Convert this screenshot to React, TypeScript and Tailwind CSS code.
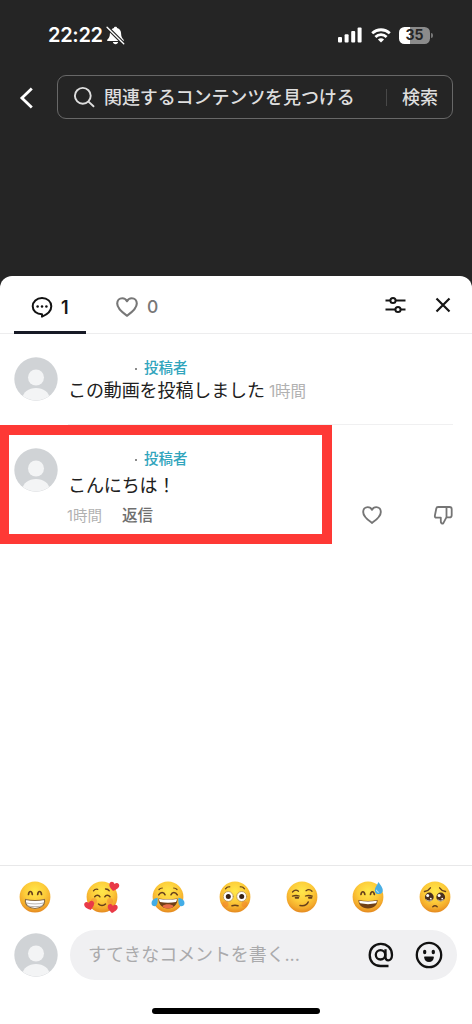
import type { ReactNode } from 'react';

const Avatar = () => (
    <svg viewBox="0 0 44 44" className="w-11 h-11 shrink-0">
        <defs>
            <clipPath id="avatar-clip">
                <circle cx="22" cy="22" r="21.5" />
            </clipPath>
        </defs>
        <circle cx="22" cy="22" r="21.7" fill="#d0d3d6" />
        <g clipPath="url(#avatar-clip)" fill="#f3f4f5">
            <circle cx="22" cy="20.5" r="8" />
            <ellipse cx="22" cy="41.5" rx="13.5" ry="10.5" />
        </g>
    </svg>
);

const Heart = ({ className }: { className: string }) => (
    <svg viewBox="0 0 22 20" className={className} fill="none" stroke="currentColor" strokeWidth="2.1" strokeLinejoin="round">
        <path d="M11 18.8C8.2 16.8 1.2 12.2 1.2 6.6 1.2 3.5 3.4 1.2 6.2 1.2c2.2 0 3.9 1.1 4.8 3 .9-1.9 2.6-3 4.8-3 2.8 0 5 2.3 5 5.4 0 5.6-7 10.2-9.8 12.2Z" />
    </svg>
);

const StatusBar = () => (
    <div className="h-[70px] flex items-center pl-12 pr-[39px] text-white">
        <span className="font-['Inter'] font-semibold text-[20px] leading-6 tracking-[-0.3px] w-[56px] whitespace-nowrap">22:22</span>
        <svg viewBox="0 0 18 18" className="w-[19px] h-[19px] ml-[2px] mt-px">
            <path d="M9 .8c.9 0 1.4.5 1.5 1.2 2.500.7 3.700 2.700 3.800 5.200.1 3 .7 4 2.200 5.500.7.8.4 1.500-.5 1.500H2c-.9 0-1.300-.7-.6-1.500C3 11.200 3.600 10.200 3.700 7.200 3.800 4.700 5 2.700 7.500 2 7.600 1.300 8.100.8 9 .8ZM6.500 15.200h5c-.3 1.300-1.200 2.100-2.500 2.100s-2.200-.8-2.500-2.100Z" fill="#fff" />
            <path d="m1 1.200 15.800 15.600" stroke="#252525" strokeWidth="3.500" />
            <path d="m1 1.200 15.800 15.600" stroke="#fff" strokeWidth="1.300" strokeLinecap="round" />
        </svg>
        <div className="flex items-center ml-auto">
            <svg viewBox="0 0 24 16" className="w-6 h-4 fill-white">
                <rect x="0" y="10" width="4" height="5.500" rx="1" />
                <rect x="6.600" y="7.200" width="4" height="8.300" rx="1" />
                <rect x="13.200" y="4" width="4" height="11.500" rx="1" />
                <rect x="19.600" y="0.500" width="4" height="15" rx="1" />
            </svg>
            <svg viewBox="0 0 20 15" className="w-5 h-[15px] ml-[9px]" fill="none" stroke="#fff" strokeWidth="2.800">
                <path d="M1.200 5.200c5-4.600 12.600-4.600 17.600 0" />
                <path d="M4.400 8.900c3.200-3 8-3 11.200 0" />
                <path d="M10 14.600 6.900 11.500c1.700-1.600 4.500-1.600 6.200 0Z" fill="#fff" stroke="none" />
            </svg>
            <div className="ml-[8px] w-[31px] h-[17px] rounded-[5.500px] bg-linear-to-r from-white from-36% to-[#8b8b8b] to-36% flex items-center justify-center text-[#252525] text-[14px] leading-none font-bold font-['Inter']">
                35
            </div>
            <div className="ml-px w-[2px] h-[5px] rounded-r bg-[#777]"></div>
        </div>
    </div>
);

const SearchHeader = () => (
    <div className="flex items-center pl-[19px] pr-[19px] mt-[5px] h-[44px] text-[#dedede]">
        <svg viewBox="0 0 14 22" className="w-[14px] h-[22px] mt-px" fill="none" stroke="#fff" strokeWidth="2.800">
            <path d="M12.800 1.500 2.900 11l9.900 9.500" />
        </svg>
        <div className="ml-[24px] flex-1 h-[44px] flex items-center rounded-[9px] border-[1.500px] border-[#686868] text-[18px] font-medium whitespace-nowrap">
            <svg viewBox="0 0 22 22" className="w-[22px] h-[22px] ml-[15px] shrink-0" fill="none" stroke="currentColor" strokeWidth="1.900">
                <circle cx="9.800" cy="9.800" r="7.900" />
                <path d="m15.500 15.600 5 4.700" strokeLinecap="round" />
            </svg>
            <span className="ml-[9px] w-[252px] tracking-[-0.1px]">関連するコンテンツを見つける</span>
            <span className="ml-[30px] w-px h-[17px] bg-[#484848]"></span>
            <span className="ml-[15px] tracking-[-0.1px]">検索</span>
        </div>
    </div>
);

const Tabs = () => (
    <div className="h-[58px] flex items-stretch border-b border-[#ededee] pl-[14px] pr-[21px]">
        <div className="relative w-[73px] flex items-center pt-[4px]">
            <svg viewBox="0 0 22 22" className="w-[22px] h-[22px] ml-[17px]" fill="none" stroke="#111" strokeWidth="2">
                <path d="M11 18.200c-5.400 0-9.300-3.300-9.300-7.900S5.600 2 11 2s9.300 3.600 9.300 8.200c0 4.200-3.600 8-9.300 10.400v-2.400Z" strokeLinejoin="round" />
                <g fill="#111" stroke="none">
                    <circle cx="6.600" cy="10.500" r="1.250" />
                    <circle cx="11" cy="10.500" r="1.250" />
                    <circle cx="15.400" cy="10.500" r="1.250" />
                </g>
            </svg>
            <span className="ml-[8px] mt-px text-[18px] font-semibold text-[#161616]">1</span>
            <span className="absolute left-0 -bottom-px w-[72px] h-[3px] bg-[#171a26]"></span>
        </div>
        <div className="flex items-center ml-[29px] pt-[5px] text-[#777]">
            <Heart className="w-[22px] h-5" />
            <span className="ml-[9px] text-[17.500px] font-medium">0</span>
        </div>
        <div className="flex items-center ml-auto">
            <svg viewBox="0 0 21 18" className="w-[21px] h-[18px]" fill="none" stroke="#161616" strokeWidth="2">
                <path d="M.5 4.500h5M10.500 4.500h10M.5 13.500H10M15.500 13.500h5" />
                <circle cx="8" cy="4.500" r="2.600" />
                <circle cx="13" cy="13.500" r="2.600" />
            </svg>
            <svg viewBox="0 0 16 16" className="w-4 h-4 ml-[29px] mt-px" stroke="#161616" strokeWidth="2.200">
                <path d="m1.500 1.500 13 13M14.500 1.500l-13 13" />
            </svg>
        </div>
    </div>
);

const AuthorTag = () => (
    <div className="pl-[67px] flex items-center h-[18px] text-[14.500px] font-medium text-[#31a5bd] whitespace-nowrap">
        <span className="w-[2px] h-[2px] bg-[#666] rounded-full mr-[7px] mt-[2px]"></span>
        <span>投稿者</span>
    </div>
);

const Comments = () => (
    <div className="relative">
        <div className="flex items-start pl-[14px] pt-[23px] h-[91px]">
            <Avatar />
            <div className="ml-[10px] pt-[2px]">
                <AuthorTag />
                <p className="mt-px text-[18px] leading-[26px] text-[#202020] whitespace-nowrap tracking-[-0.1px]">
                    この動画を投稿しました
                    <span className="ml-[4px] text-[15.500px] text-[#b1b1b1] tracking-[-0.1px]">1時間</span>
                </p>
            </div>
        </div>
        <div className="ml-[68px] mr-[19px] -mt-px h-px bg-[#f0f0f1]"></div>

        <div className="flex items-start pl-[14px] pt-[23px] h-[118px]">
            <Avatar />
            <div className="ml-[10px] pt-[2px]">
                <AuthorTag />
                <p className="mt-[5px] text-[18px] leading-[26px] text-[#202020] whitespace-nowrap tracking-[-0.1px]">こんにちは！</p>
                <div className="mt-[7px] flex items-center text-[14.500px] leading-5">
                    <span className="text-[#b1b1b1] w-[54px] -ml-px mr-px">1時間</span>
                    <span className="text-[#6f6f6f] font-medium text-[15.500px]">返信</span>
                </div>
            </div>
            <div className="ml-auto mr-[19px] mt-[57px] flex items-center gap-[51px] text-[#757575]">
                <Heart className="w-[20px] h-[18px]" />
                <svg viewBox="0 0 20 20" className="w-5 h-5" fill="none" stroke="currentColor" strokeWidth="1.800" strokeLinejoin="round">
                    <path d="M13.500 2H5C4 2 3.500 2.500 3.300 3.500L1.900 10.500c-.3 1.500.3 2.100 1.500 2.100h4.400v3.600c0 1.700.8 2.500 2.300 2.500l3.400-6.500V2Z" />
                    <path d="M13.500 2h3c1.400 0 2.200.8 2.200 2.200v6c0 1.400-.8 2.200-2.200 2.200h-3" />
                </svg>
            </div>
        </div>

        {/* Highlight frame over the second comment */}
        <div className="absolute left-0 top-[91px] w-[332px] h-[119px] border-[10px] border-l-[9px] border-[#fe3935]"></div>
    </div>
);

const Face = ({ children }: { children: ReactNode }) => (
    <svg viewBox="-18 -18 36 36" className="w-9 h-9" fill="none" strokeLinecap="round">
        <defs>
            <radialGradient id="face" cx="0.5" cy="0.32" r="0.68">
                <stop offset="0" stopColor="#ffe84a" />
                <stop offset="0.5" stopColor="#fdcc3a" />
                <stop offset="0.8" stopColor="#f4ac2c" />
                <stop offset="1" stopColor="#e58a20" />
            </radialGradient>
        </defs>
        <circle r="15.400" fill="url(#face)" />
        {children}
    </svg>
);

const SmallHeart = ({ x, y, r }: { x: number; y: number; r: number }) => (
    <path
        transform={`translate(${x} ${y}) rotate(${r})`}
        d="M0 4.600C-2 3.200-5 1.200-5-1.500-5-4.300-1.600-5.300 0-2.500 1.600-5.300 5-4.300 5-1.500 5 1.200 2 3.200 0 4.600Z"
        fill="#e93a47"
    />
);

const brown = '#66401c';

const faces = [
    <Face key="grin">
        <path d="M-6.500-2.500c.4-4 3.400-4 3.800 0M2.700-2.500c.4-4 3.400-4 3.800 0" stroke={brown} strokeWidth="1.700" />
        <path d="M-9.500 2.500c6 1.300 13 1.300 19 0 1 5-3.400 9-9.500 9s-10.500-4-9.500-9Z" fill="#fff" stroke="#8b6b42" strokeWidth="1.100" />
        <path d="M-9 5.900C-4 7.300 4 7.300 9 5.900M-7.500 8.900c4 1 11 1 15 0" stroke="#a6a19a" strokeWidth=".8" />
    </Face>,
    <Face key="hearts">
        <path d="M-8.500-6.200c1-1.400 2.500-1.900 4.200-1.500M3.500-8c1.700-.1 3 .5 3.800 1.800" stroke={brown} strokeWidth="1.300" />
        <path d="M-7.300-.2c1.500-2 4-2 5.200 0M2.800-.2c1.200-2 3.700-2 5.200 0M-3.500 7c2 2.100 5 2.100 7 0" stroke={brown} strokeWidth="1.500" />
        <circle cx="-8" cy="4" r="3" fill="#f17b31" opacity=".4" />
        <circle cx="8" cy="4" r="3" fill="#f17b31" opacity=".4" />
        <SmallHeart x={12} y={-10.5} r={12} />
        <SmallHeart x={-12.5} y={8.5} r={-14} />
        <SmallHeart x={10.5} y={11.5} r={8} />
    </Face>,
    <Face key="joy">
        <path d="M-9-7.500c1-1 2-1.500 3.300-1.500M5.700-9c1.300 0 2.300.5 3.300 1.500" stroke={brown} strokeWidth="1.200" />
        <path d="M-9.300-2.200c1.800-3 5.200-3 6.300 0M3-2.200c1.100-3 4.500-3 6.300 0" stroke={brown} strokeWidth="1.600" />
        <path d="M-9.500 1.500c5 .9 14 .9 19 0C9.800 7 6 11.500 0 11.500S-9.800 7-9.500 1.500Z" fill="#704016" />
        <path d="M-8.900 2c5 .7 12.800.7 17.800 0 0 1.500-.4 2.400-1 2.900C3 6-3 6-7.900 4.900c-.6-.5-1-1.400-1-2.900Z" fill="#fff" />
        <path d="M-5.700 9.200c2.500-2.500 8.900-2.500 11.400 0-2.500 3-8.900 3-11.400 0Z" fill="#e76d49" />
        <path d="M-10.500.8c-4 1-6 2.600-6 5.200 0 2.100 1.500 3.200 3.200 3.200C-10.500 9.200-10 5-10.500.8ZM10.500.8c4 1 6 2.600 6 5.200 0 2.100-1.500 3.200-3.200 3.200C10.500 9.200 10 5 10.500.8Z" fill="#43ade7" />
    </Face>,
    <Face key="flushed">
        <path d="M-9.500-8.200c1-1.500 2.500-2.200 4.300-2M5.200-10.200c1.800-.2 3.300.5 4.300 2" stroke={brown} strokeWidth="1.200" />
        <circle cx="-6.700" cy="-.5" r="5" fill="#fff" stroke="#b8924c" strokeWidth=".8" />
        <circle cx="6.700" cy="-.5" r="5" fill="#fff" stroke="#b8924c" strokeWidth=".8" />
        <circle cx="-6.700" cy="-.5" r="2.500" fill="#382216" />
        <circle cx="6.700" cy="-.5" r="2.500" fill="#382216" />
        <circle cx="-9.500" cy="7.200" r="3" fill="#f26c2b" opacity=".35" />
        <circle cx="9.500" cy="7.200" r="3" fill="#f26c2b" opacity=".35" />
        <path d="M-3 8.700c2-.6 4-.6 6 0" stroke={brown} strokeWidth="1.500" />
    </Face>,
    <Face key="smirk">
        <path d="M-9.500-5c1.700-1.900 4-2.300 6-.8M4-6.300c2-1.500 4.400-1.200 6 .6" stroke={brown} strokeWidth="1.300" />
        <path d="M-9.500-.8c2-.8 4.500-.9 6.700-.2M3.500-1c2.200-.7 4.700-.6 6.700.2" stroke={brown} strokeWidth="1.300" />
        <path d="M-6.300.8h2.500M7 .8h2.400" stroke={brown} strokeWidth="2" />
        <path d="M-2 8.500C2 9 5.200 8 6.200 5" stroke={brown} strokeWidth="1.500" />
    </Face>,
    <Face key="sweat">
        <path d="M-7-2.500c.4-3.700 3.400-3.700 3.800 0M2.500-2.500c.4-3.700 3.400-3.700 3.800 0" stroke={brown} strokeWidth="1.700" />
        <path d="M-9.500 3c6 1.300 13 1.300 19 0C9.800 7.500 6 11.500 0 11.500S-9.800 7.500-9.500 3Z" fill="#704016" />
        <path d="M-8.800 3.700c6 1 11.600 1 17.600 0 0 1.300-.4 2.100-1 2.600-5 1.100-10.600 1.100-15.600 0-.6-.5-1-1.300-1-2.600Z" fill="#fff" />
        <path d="M10.500-15c2 3.300 4.300 5.500 4.300 8a4 4 0 0 1-8 .2c0-2.600 2.400-4.900 3.700-8.200Z" fill="#49aee3" />
        <path d="M8.600-6.800c0 1.200.8 1.900 1.700 2" stroke="#d5f4ff" strokeWidth="1" />
    </Face>,
    <Face key="pleading">
        <path d="M-10.500-5.500c2.600-.5 4.600-1.600 5.900-3.700M10.500-5.500c-2.600-.5-4.600-1.600-5.900-3.700" stroke={brown} strokeWidth="1.400" />
        <circle cx="-5.700" cy="0" r="4.400" fill="#49301f" />
        <circle cx="5.700" cy="0" r="4.400" fill="#49301f" />
        <circle cx="-7.300" cy="-1.500" r="1.500" fill="#fff" />
        <circle cx="4.100" cy="-1.500" r="1.500" fill="#fff" />
        <circle cx="-4.200" cy="1.600" r=".9" fill="#fff" />
        <circle cx="7.200" cy="1.600" r=".9" fill="#fff" />
        <path d="M-8.500 2.900c1.500 1.500 4 1.500 5.500 0M3 2.900c1.500 1.500 4 1.500 5.500 0" stroke="#eee2cf" strokeWidth=".8" />
        <path d="M-2.200 9.800c1.300-1.300 3.100-1.300 4.400 0" stroke={brown} strokeWidth="1.400" />
    </Face>,
];

const Footer = () => (
    <div className="mt-auto h-[159px] border-t border-[#e8e8e9]">
        <div className="flex justify-between items-center h-[62px] pl-[17px] pr-[19px]">{faces}</div>
        <div className="flex items-center mt-px h-[51px] pl-[14px] pr-[15px]">
            <Avatar />
            <div className="ml-[12px] flex-1 flex items-center h-[50px] rounded-full bg-[#f0f0f2] pl-[18px] pr-[14px]">
                <span className="text-[18px] text-[#aaaaac] tracking-[-0.1px] whitespace-nowrap">すてきなコメントを書く...</span>
                <svg viewBox="0 0 26 26" className="w-[26px] h-[26px] ml-auto" fill="none" stroke="#111" strokeWidth="2.300">
                    <circle cx="12.500" cy="12.800" r="4.700" />
                    <path d="M17.500 7.200v8.100c0 2 1.100 3 2.800 3s3.700-1.800 3.700-5.300C24 6.300 19.200 1.900 12.800 1.900 6.200 1.900 1.700 6.700 1.700 13c0 6.500 4.500 11 10.800 11h8" />
                </svg>
                <svg viewBox="0 0 28 28" className="w-7 h-7 ml-[21px]" fill="#111">
                    <circle cx="14" cy="14" r="12.200" fill="none" stroke="#111" strokeWidth="2.300" />
                    <ellipse cx="9.700" cy="11" rx="1.700" ry="2.200" />
                    <ellipse cx="18.300" cy="11" rx="1.700" ry="2.200" />
                    <path d="M9.800 15.500h8.400c.5 0 .8.300.7.8-.3 2.900-2.100 4.700-4.900 4.700s-4.600-1.800-4.900-4.700c-.1-.5.2-.8.7-.8Z" />
                </svg>
            </div>
        </div>
        <div className="mt-[28px] mx-auto w-[168px] h-[6px] rounded-full bg-black"></div>
    </div>
);

const App = () => {
    return (
        <div className="w-full h-screen flex flex-col overflow-hidden bg-[#252525] font-['Inter','Noto_Sans_CJK_JP',sans-serif]">
            <header className="h-[276px] shrink-0">
                <StatusBar />
                <SearchHeader />
            </header>
            <main className="flex-1 flex flex-col bg-white rounded-t-[12px]">
                <Tabs />
                <Comments />
                <Footer />
            </main>
        </div>
    );
};

export default App;
